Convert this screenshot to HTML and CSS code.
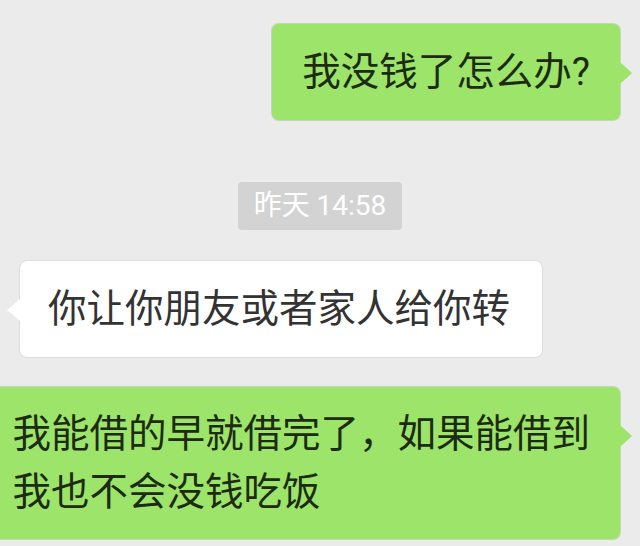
FILE: index.html
```html
<!DOCTYPE html>
<html lang="zh-CN">
<head>
<meta charset="utf-8">
<title>Chat</title>
<link rel="stylesheet" href="styles.css">
</head>
<body>
<div class="chat">
  <div class="row row-right row-first">
    <div class="bubble bubble-green bubble-short">我没钱了怎么办?</div>
  </div>
  <div class="time-row">
    <span class="time">昨天 14:58</span>
  </div>
  <div class="row row-left row-mid">
    <div class="bubble bubble-white bubble-short bubble-reply">你让你朋友或者家人给你转</div>
  </div>
  <div class="row row-right">
    <div class="bubble bubble-green bubble-long">我能借的早就借完了，如果能借到<br>我也不会没钱吃饭</div>
  </div>
</div>
</body>
</html>
```

FILE: styles.css
```css
html, body {
  margin: 0;
  padding: 0;
  overflow: hidden;
  background: #ebebeb;
}

.chat {
  width: 640px;
  height: 546px;
  padding-top: 24px;
  box-sizing: border-box;
  display: flex;
  flex-direction: column;
  font-family: Roboto, "Noto Sans CJK SC", sans-serif;
}

.row {
  display: flex;
}

.row-right {
  justify-content: flex-end;
  padding-right: 20px;
}

.row-left {
  justify-content: flex-start;
  padding-left: 20px;
}

.row-first {
  margin-bottom: 62px;
}

.row-mid {
  margin-bottom: 30px;
}

.time-row {
  display: flex;
  justify-content: center;
  margin-bottom: 31px;
}

.time {
  background: #d3d3d3;
  color: #ffffff;
  font-size: 28px;
  line-height: 48px;
  height: 48px;
  padding: 0 16px;
  border-radius: 4px;
}

.bubble {
  position: relative;
  white-space: nowrap;
  border-radius: 7px;
  flex-shrink: 0;
}

.bubble::after {
  content: "";
  position: absolute;
  top: 38px;
  width: 0;
  height: 0;
  border-top: 11px solid transparent;
  border-bottom: 11px solid transparent;
}

.bubble-green {
  background: #9de46a;
  color: #1c2b12;
  box-shadow: 0 0 0 1px rgba(120, 180, 80, 0.35);
}

.bubble-green::after {
  left: 100%;
  border-left: 12px solid #9de46a;
}

.bubble-white {
  background: #ffffff;
  color: #333333;
  box-shadow: 0 0 0 1px rgba(0, 0, 0, 0.06);
}

.bubble-white::after {
  right: 100%;
  border-right: 13px solid #ffffff;
}

.bubble-short {
  font-size: 38.5px;
  line-height: 54px;
  padding: 21px 30px 21px 30px;
}

.bubble-reply {
  padding: 21px 32px 21px 28px;
}

.bubble-long {
  font-size: 38.5px;
  line-height: 58px;
  padding: 18px 30px 18px 30px;
}
```
